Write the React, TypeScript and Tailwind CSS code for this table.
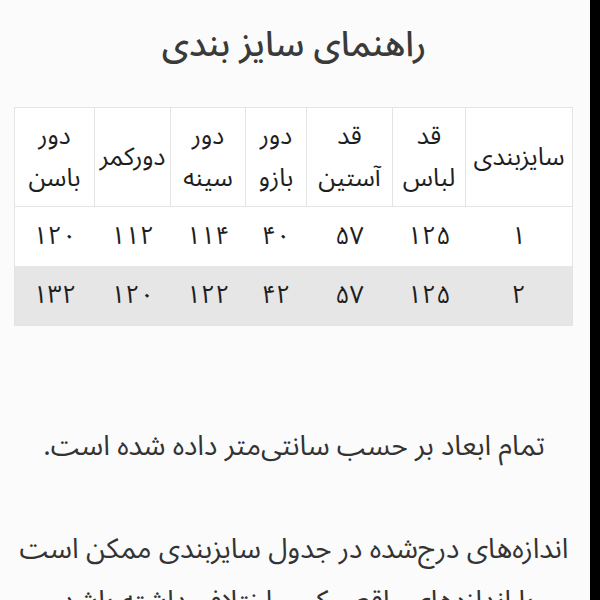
import React from "react";

const headers = [
  { label: ["سایزبندی"], w: "w-[107px]" },
  { label: ["قد", "لباس"], w: "w-[73px]" },
  { label: ["قد", "آستین"], w: "w-[86px]" },
  { label: ["دور", "بازو"], w: "w-[61px]" },
  { label: ["دور", "سینه"], w: "w-[75px]" },
  { label: ["دورکمر"], w: "w-[76px]" },
  { label: ["دور", "باسن"], w: "w-[80px]" },
];

const rows = [
  ["۱", "۱۲۵", "۵۷", "۴۰", "۱۱۴", "۱۱۲", "۱۲۰"],
  ["۲", "۱۲۵", "۵۷", "۴۲", "۱۲۲", "۱۲۰", "۱۳۲"],
];

export default function App() {
  return (
    <div className="flex h-[600px] w-[600px] overflow-hidden">
      <div
        dir="rtl"
        className="w-[590px] min-w-0 shrink-0 overflow-hidden bg-[#fbfbfb] pl-[15px] pr-[17px] text-[#2b2b2b]"
        style={{ fontFamily: '"Noto Sans Arabic", "DejaVu Sans", sans-serif' }}
      >
        <h1 className="pt-[22px] text-center text-[35px] font-medium leading-[46px] text-[#3a3a3a]">
          راهنمای سایز بندی
        </h1>

        <table className="mt-[39px] w-[558px] table-fixed border-collapse border border-[#e4e4e4]">
          <thead>
            <tr className="h-[99px] bg-white">
              {headers.map((h, i) => (
                <th
                  key={i}
                  className={`${h.w} border border-[#e4e4e4] px-0 text-center text-[25px] font-normal leading-[42px] text-[#1e1e1e] whitespace-nowrap`}
                >
                  {h.label.map((l, j) => (
                    <div key={j}>{l}</div>
                  ))}
                </th>
              ))}
            </tr>
          </thead>
          <tbody>
            {rows.map((r, i) => (
              <tr
                key={i}
                className={i === 1 ? "h-[60px] bg-[#e6e6e6]" : "h-[59px] bg-white"}
              >
                {r.map((c, j) => (
                  <td key={j} className="text-center text-[25px] text-[#1e1e1e]">
                    {c}
                  </td>
                ))}
              </tr>
            ))}
          </tbody>
        </table>

        <p className="mt-[96px] text-center text-[28px] leading-[50px] text-[#333]">
          تمام ابعاد بر حسب سانتی‌متر داده شده است.
        </p>
        <p className="mt-[52px] text-center text-[28px] leading-[52px] text-[#333]">
          اندازه‌های درج‌شده در جدول سایزبندی ممکن است
          <br />
          با اندازه‌های واقعی کمی اختلاف داشته باشد.
        </p>
      </div>
      <div className="w-[10px] shrink-0 bg-black" />
    </div>
  );
}
